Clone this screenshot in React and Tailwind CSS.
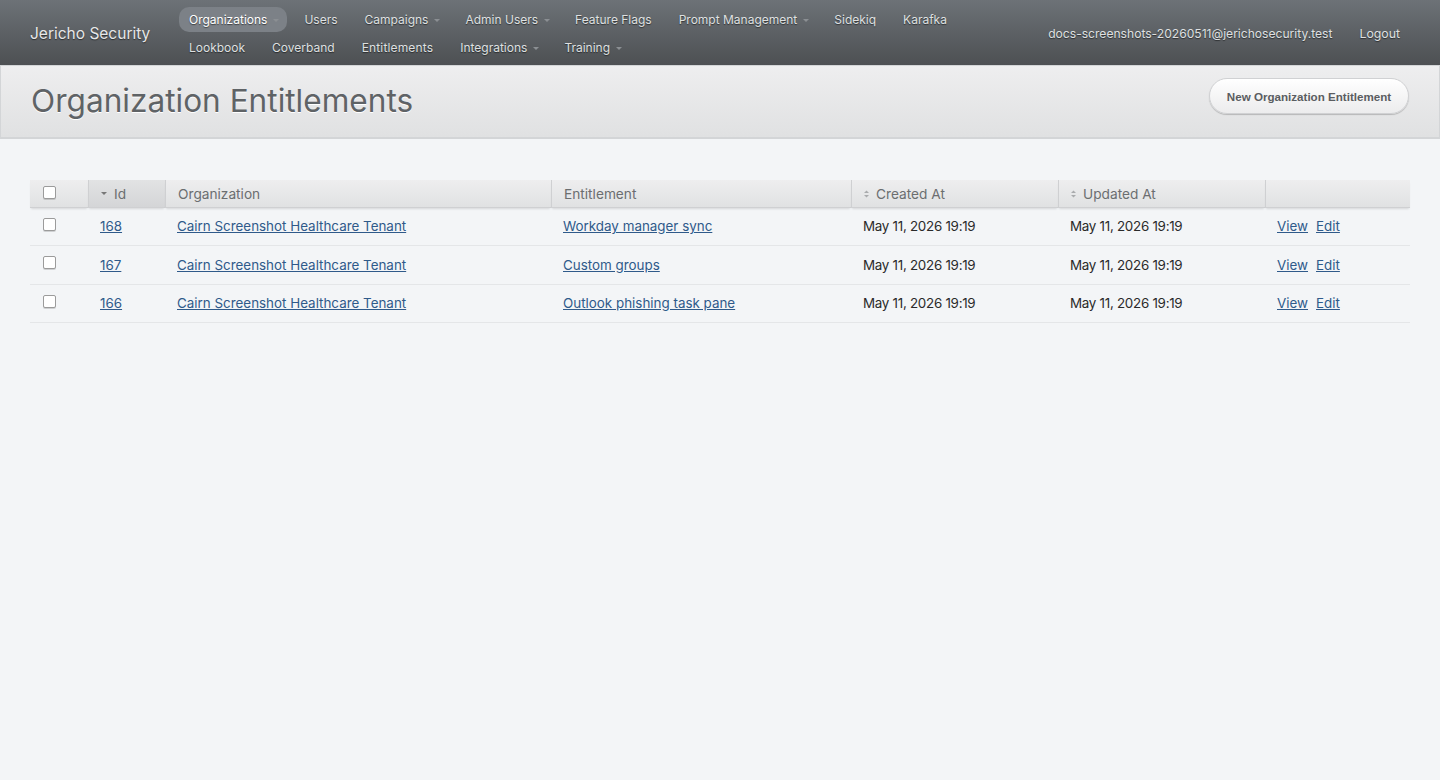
const navRowOne = [
  { label: "Organizations", caret: true, active: true },
  { label: "Users" },
  { label: "Campaigns", caret: true },
  { label: "Admin Users", caret: true },
  { label: "Feature Flags" },
  { label: "Prompt Management", caret: true },
  { label: "Sidekiq" },
  { label: "Karafka" },
];

const navRowTwo = [
  { label: "Lookbook" },
  { label: "Coverband" },
  { label: "Entitlements", wide: true },
  { label: "Integrations", caret: true },
  { label: "Training", caret: true },
];

const rows = [
  { id: 168, entitlement: "Workday manager sync" },
  { id: 167, entitlement: "Custom groups" },
  { id: 166, entitlement: "Outlook phishing task pane" },
];

const NavItem = ({ item }) => (
  <a
    href="#"
    className={
      "mr-[7px] flex h-[25px] items-center rounded-[10px] pl-[10px] text-[12px] [text-shadow:0_1px_1px_rgba(0,0,0,0.5)] " +
      (item.caret ? "pr-[8px] " : "pr-[10px] ") +
      (item.wide ? "tracking-[0.15px] " : "") +
      (item.active ? "bg-[#7c8187] text-white" : "text-[#dfe0e1]")
    }
  >
    {item.label}
    {item.caret && (
      <span className="ml-[6px] mt-[1px] h-0 w-0 border-x-[3px] border-t-[3px] border-x-transparent border-t-[#8b8f93]" />
    )}
  </a>
);

const SortArrows = () => (
  <svg width="5" height="8" viewBox="0 0 5 8" className="mr-[7px]">
    <path d="M2.5 0.5L5 3H0z" fill="#a9abad" />
    <path d="M2.5 7.5L5 5H0z" fill="#a9abad" />
  </svg>
);

const HeadCell = ({ children, className = "" }) => (
  <th
    className={
      "h-[28px] border-b border-l border-[#cfd0d2] px-3 pt-[2px] text-left text-[13.7px] font-normal text-[#6b6e70] shadow-[0_2px_2px_-1px_rgba(0,0,0,0.12)] " +
      className
    }
  >
    {children}
  </th>
);

const Cell = ({ children, className = "" }) => (
  <td className={"border-b border-[#e4e6e8] px-3 pt-[0.4px] " + className}>{children}</td>
);

const LinkText = ({ children }) => (
  <a href="#" className="text-[#2f5a8a] underline">
    {children}
  </a>
);

const Checkbox = () => (
  <input
    type="checkbox"
    readOnly
    className="mb-[4px] ml-[1px] block h-[13px] w-[13px] appearance-none rounded-[2px] border border-[#9b9b9b] bg-white shadow-[0_1px_0_rgba(0,0,0,0.15)]"
  />
);

const App = () => {
  return (
    <div className="min-h-[780px] bg-[#f3f5f7] font-['Inter','Liberation_Sans',sans-serif] text-[13.4px] text-[#2a2a2a]">
      <header className="flex h-[65px] items-center bg-gradient-to-b from-[#6d7277] to-[#4d5053] pl-[30px] pr-[40px]">
        <a href="#" className="w-[149px] shrink-0 pt-[2px] text-[15.5px] text-[#e6e7e8] [text-shadow:0_1px_1px_rgba(0,0,0,0.5)]">
          Jericho Security
        </a>
        <nav className="flex flex-col gap-[3px] pt-[2px]">
          <div className="flex">
            {navRowOne.map((item) => (
              <NavItem key={item.label} item={item} />
            ))}
          </div>
          <div className="flex">
            {navRowTwo.map((item) => (
              <NavItem key={item.label} item={item} />
            ))}
          </div>
        </nav>
        <div className="ml-auto flex items-center gap-[27px] pt-[4px] text-[12.1px] text-[#dfe0e1] [text-shadow:0_1px_1px_rgba(0,0,0,0.5)]">
          <span>docs-screenshots-20260511@jerichosecurity.test</span>
          <a href="#" className="text-[12.3px]">Logout</a>
        </div>
      </header>

      <div className="flex h-[74px] items-start justify-between border border-b-2 border-[#d3d5d7] bg-gradient-to-b from-[#eeeeef] to-[#e0e1e2] pl-[30px] pr-[30px]">
        <h1 className="mt-[15px] text-[31.6px] leading-[40px] font-normal text-[#5f6366] [text-shadow:0_1px_0_#fff]">
          Organization Entitlements
        </h1>
        <a
          href="#"
          className="mt-[12px] flex h-[36px] w-[200px] items-center justify-center rounded-[18px] border border-[#d0d1d3] bg-gradient-to-b from-white to-[#ececed] pt-[1px] font-['Liberation_Sans',sans-serif] text-[11.6px] font-bold text-[#5a5d61] shadow-[0_1px_1px_rgba(0,0,0,0.2)]"
        >
          New Organization Entitlement
        </a>
      </div>

      <div className="px-[30px] pt-[40.5px]">
        <table className="w-[1380px] table-fixed border-separate border-spacing-0">
          <colgroup>
            <col className="w-[58px]" />
            <col className="w-[77px]" />
            <col className="w-[386px]" />
            <col className="w-[300px]" />
            <col className="w-[207px]" />
            <col className="w-[207px]" />
            <col className="w-[145px]" />
          </colgroup>
          <thead className="bg-gradient-to-b from-[#eeeeef] to-[#e0e1e2]">
            <tr>
              <HeadCell className="border-l-0">
                <Checkbox />
              </HeadCell>
              <HeadCell className="bg-gradient-to-b from-[#e2e3e4] to-[#d4d5d7]">
                <span className="flex items-center">
                  <span className="mr-[7px] h-0 w-0 border-x-[3px] border-t-[3px] border-x-transparent border-t-[#777]" />
                  Id
                </span>
              </HeadCell>
              <HeadCell>Organization</HeadCell>
              <HeadCell>Entitlement</HeadCell>
              <HeadCell>
                <span className="flex items-center">
                  <SortArrows />
                  Created At
                </span>
              </HeadCell>
              <HeadCell>
                <span className="flex items-center">
                  <SortArrows />
                  Updated At
                </span>
              </HeadCell>
              <HeadCell />
            </tr>
          </thead>
          <tbody>
            {rows.map((row) => (
              <tr key={row.id} className="h-[38.5px]">
                <Cell>
                  <Checkbox />
                </Cell>
                <Cell>
                  <LinkText>{row.id}</LinkText>
                </Cell>
                <Cell>
                  <LinkText>Cairn Screenshot Healthcare Tenant</LinkText>
                </Cell>
                <Cell>
                  <LinkText>{row.entitlement}</LinkText>
                </Cell>
                <Cell className="tracking-[-0.28px]">May 11, 2026 19:19</Cell>
                <Cell className="tracking-[-0.28px]">May 11, 2026 19:19</Cell>
                <Cell>
                  <LinkText>View</LinkText>
                  <span className="ml-[8px]">
                    <LinkText>Edit</LinkText>
                  </span>
                </Cell>
              </tr>
            ))}
          </tbody>
        </table>
      </div>
    </div>
  );
};

export default App;
